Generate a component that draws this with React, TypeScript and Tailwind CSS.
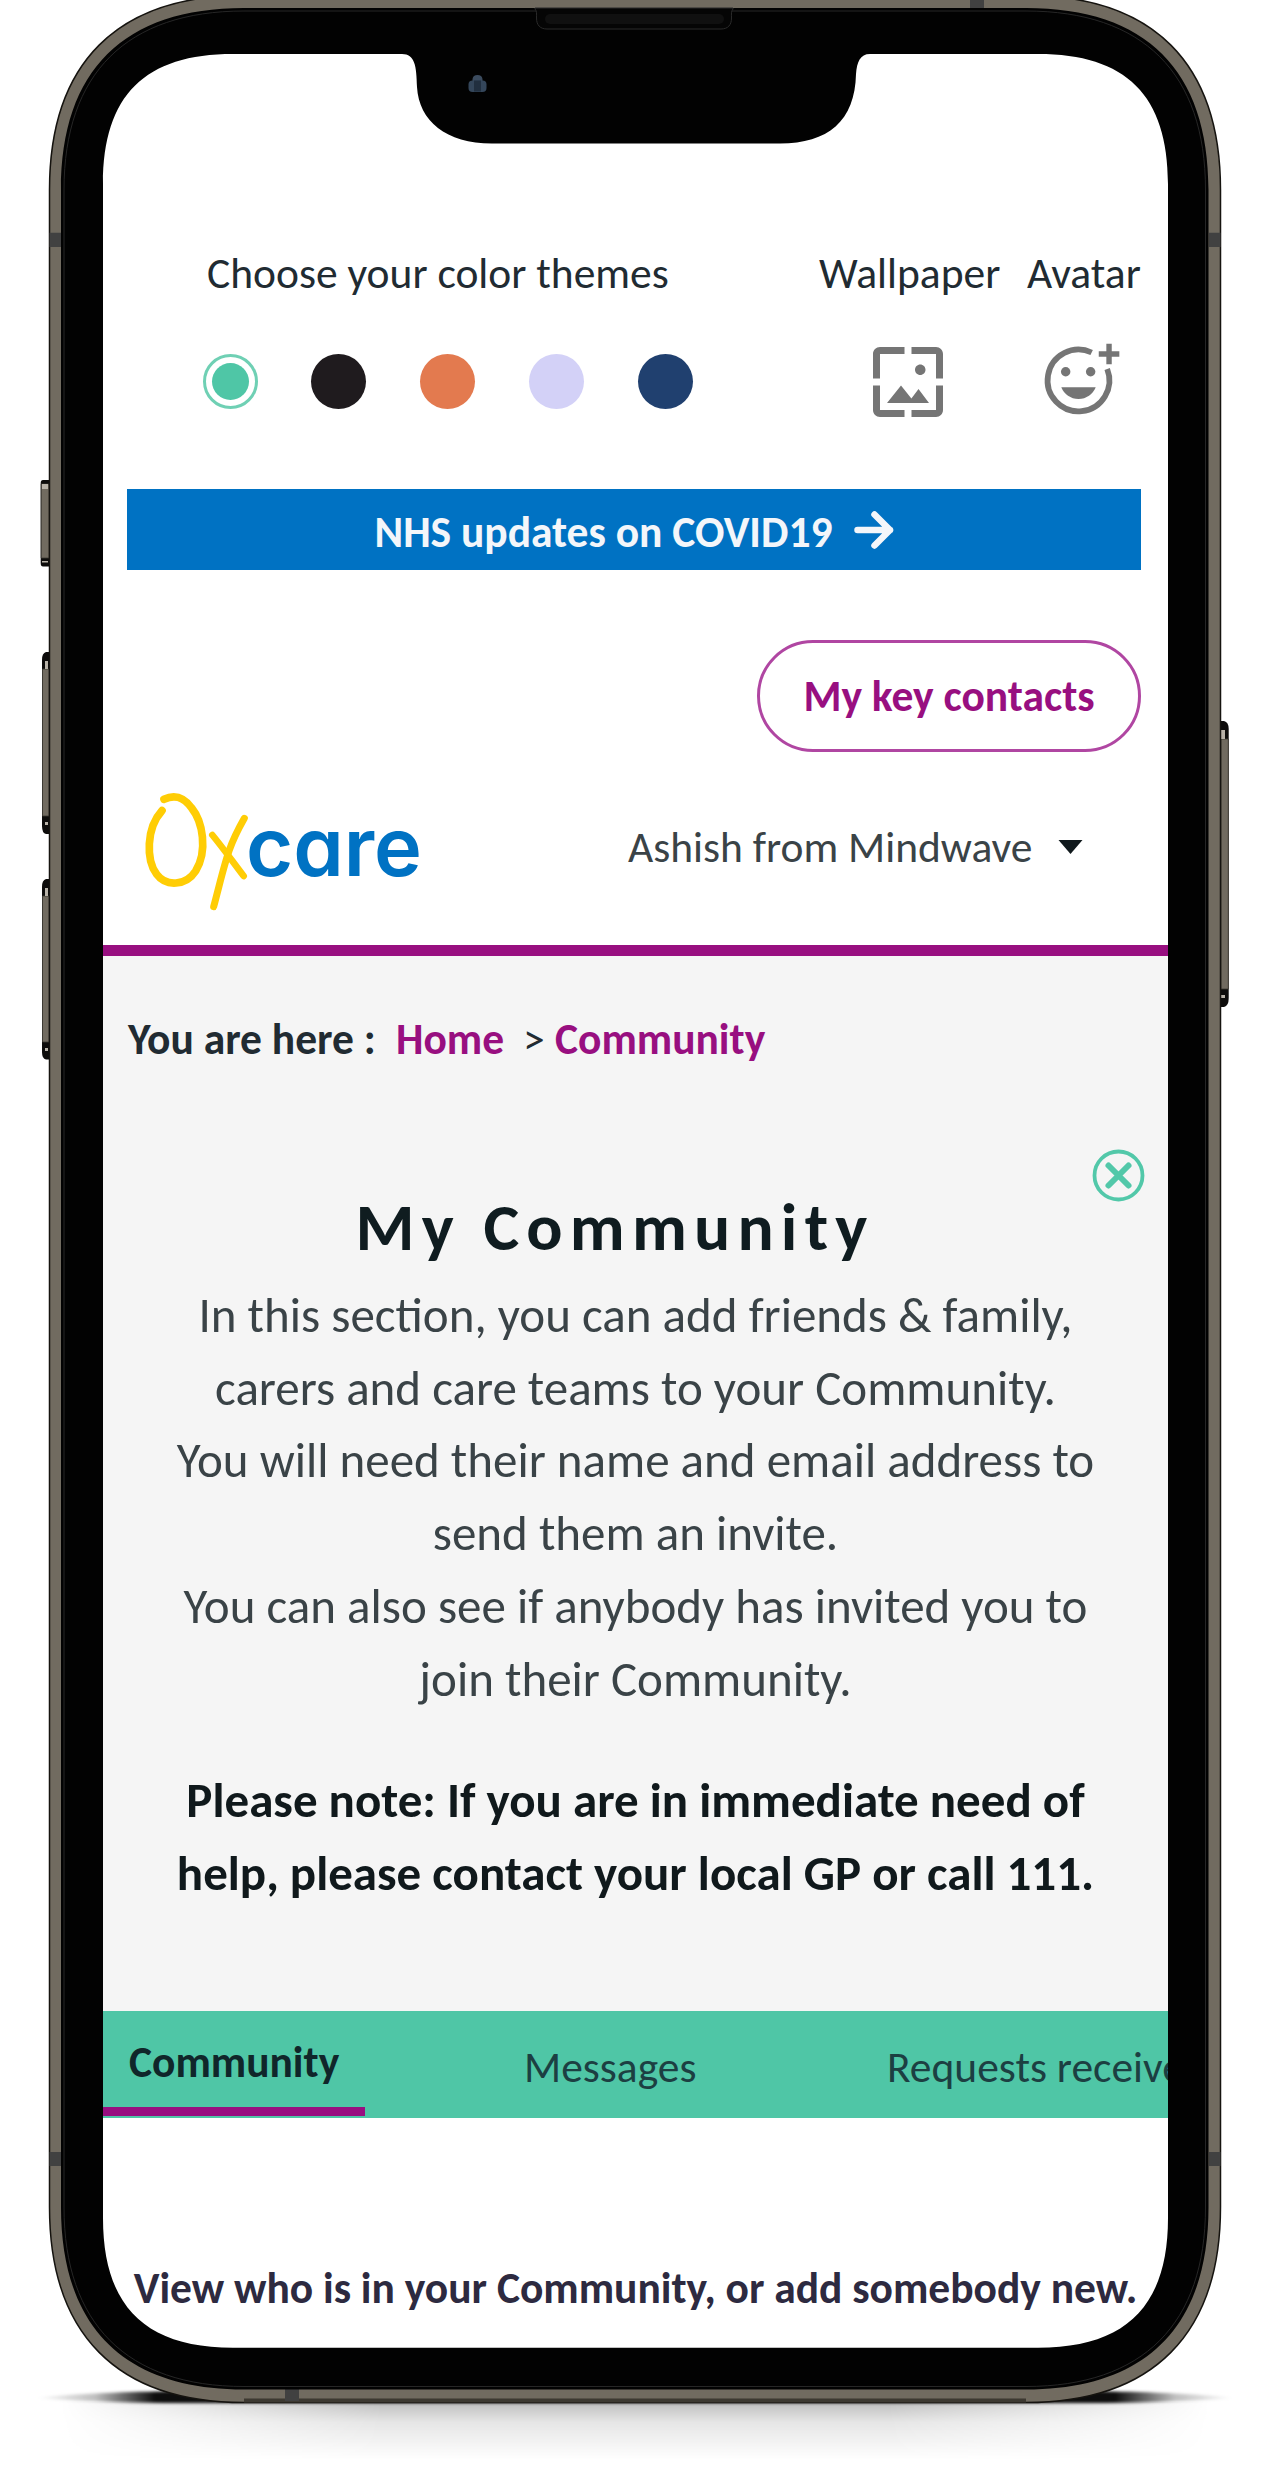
import { MdWallpaper } from "react-icons/md";

const themes = [
  { name: "Black", color: "bg-[#1f1b1e]" },
  { name: "Orange", color: "bg-[#e37a4f]" },
  { name: "Lavender", color: "bg-[#d3d1f7]" },
  { name: "Navy", color: "bg-[#20406f]" },
];

function AddReactionIcon() {
  return (
    <svg viewBox="0 0 24 24" className="h-[81px] w-[81px] overflow-visible text-[#757575]" fill="none" stroke="currentColor">
      <path d="M15.9 3.7A9.15 9.15 0 1 0 20.5 8.6" strokeWidth="1.7" />
      <path d="M21.05 1.1v6.1M18 4.15h6.1" strokeWidth="1.6" />
      <g fill="currentColor" stroke="none">
        <circle cx="8.2" cy="9.4" r="1.4" />
        <circle cx="15.6" cy="9.4" r="1.4" />
        <path d="M6.9 14h10.2c-.8 2-2.8 3.5-5.1 3.5S7.700 16 6.900 14z" />
      </g>
    </svg>
  );
}

function Logo() {
  return (
    <div className="flex h-[150px] w-[300px] shrink-0 items-start">
      <svg viewBox="0 0 312 450" className="h-[150px] w-[104px] shrink-0 overflow-visible">
        <g fill="none" stroke="#ffcd05" strokeLinecap="round">
          <path d="M66 92C18 145 18 240 50 283C78 321 138 318 167 273C204 212 188 125 155 84C128 48 102 44 72 58" strokeWidth="23" />
          <path d="M313 115C262 205 258 240 221 380" strokeWidth="21" />
          <path d="M217 165C250 205 278 245 311 288" strokeWidth="20" />
        </g>
      </svg>
      <p className="ml-0.5 mt-[17px] text-[81px] font-semibold leading-[100px] text-[#0072c3] font-[Inter] [font-feature-settings:'ss01','cv11']">care</p>
    </div>
  );
}

function PhoneFrame() {
  return (
    <svg viewBox="0 0 1266 2479" className="pointer-events-none absolute left-0 top-0 h-[2479px] w-[1266px]">
      <defs>
        <linearGradient id="contact" x1="0" x2="1" y1="0" y2="0">
          <stop offset="0" stopColor="#000" stopOpacity="0" />
          <stop offset="0.05" stopColor="#000" stopOpacity="0.25" />
          <stop offset="0.1" stopColor="#000" stopOpacity="0.95" />
          <stop offset="0.9" stopColor="#000" stopOpacity="0.95" />
          <stop offset="0.95" stopColor="#000" stopOpacity="0.25" />
          <stop offset="1" stopColor="#000" stopOpacity="0" />
        </linearGradient>
        <linearGradient id="ground" x1="0" x2="0" y1="0" y2="1">
          <stop offset="0" stopColor="#000" stopOpacity="0.26" />
          <stop offset="0.35" stopColor="#000" stopOpacity="0.1" />
          <stop offset="1" stopColor="#000" stopOpacity="0" />
        </linearGradient>
        <linearGradient id="fade" x1="0" x2="1" y1="0" y2="0">
          <stop offset="0" stopColor="#fff" stopOpacity="0" />
          <stop offset="0.28" stopColor="#fff" />
          <stop offset="0.72" stopColor="#fff" />
          <stop offset="1" stopColor="#fff" stopOpacity="0" />
        </linearGradient>
        <mask id="groundMask">
          <rect x="60" y="2390" width="1150" height="80" fill="url(#fade)" />
        </mask>
        <filter id="soft" x="-5%" y="-50%" width="110%" height="200%">
          <feGaussianBlur stdDeviation="1.5" />
        </filter>
      </defs>

      <rect x="60" y="2402" width="1150" height="58" fill="url(#ground)" mask="url(#groundMask)" />
      <path d="M35 2398C90 2392 140 2392 180 2391H1090C1130 2392 1180 2392 1235 2398C1180 2402 1130 2403 1090 2403H180C140 2403 90 2402 35 2398Z" fill="url(#contact)" filter="url(#soft)" />

      {/* side keys */}
      <g fill="#0d0c0b">
        <path d="M49 480H43Q40.700 480 40.700 483V563Q40.700 566.5 43 566.5H49Z" />
        <path d="M49 652H46Q42 653 42 660V826Q42 833 46 834H49Z" />
        <path d="M49 879H46Q42 880 42 887V1052Q42 1059 46 1059.500H49Z" />
        <path d="M1220 721H1224Q1228.700 722 1228.700 729V998Q1228.700 1006 1224 1007H1220Z" />
      </g>
      <g fill="#716b60" stroke="#3d3a34" strokeWidth="0.8">
        <path d="M41.200 484H49V558H41.200Z" />
        <path d="M42.500 669H49V816H42.500Z" />
        <path d="M42.500 896H49V1042H42.500Z" />
        <path d="M1221 739H1228.300V989H1221Z" />
      </g>
      <g fill="#b8b2a8">
        <path d="M42 484H48V489H42ZM42 561H48V562.500H42ZM45 661H48V669H45ZM45 822H48V825H45ZM45 888H48V896H45ZM45 1048H48V1051H45ZM1221 730H1225V739H1221ZM1221 995H1225V998H1221Z" />
      </g>

      {/* body, metal rim and glass; the screen area is cut out of every layer */}
      <path
        fillRule="evenodd"
        fill="#716b60"
        stroke="#15130f"
        strokeWidth="1.5"
        d="M49.500 190C49.500 63 117 -4.500 244 -4.500H1026C1153 -4.500 1220.500 63 1220.500 190V2207C1220.500 2334 1153 2402.500 1026 2402.500H244C117 2402.500 49.500 2334 49.500 2207ZM80 190V2207C80 2320 130 2372 244 2372H1026C1140 2372 1190 2320 1190 2207V190C1190 80 1140 30 1026 30H244C130 30 80 80 80 190Z"
      />
      <path d="M244 2400.500H1026" stroke="#3d3931" strokeWidth="4" />
      <g fill="#414141">
        <path d="M49.500 232.700H61V247H49.500ZM49.500 2152H61V2166H49.500ZM1209 232.700H1220.500V247H1209ZM1209 2152H1220.500V2166H1209ZM970 0H984V9H970ZM285 2389H299V2401H285Z" />
      </g>
      <path
        fillRule="evenodd"
        fill="#020202"
        d="M61 190C61 70 124 8 244 8H1026C1146 8 1208.500 70 1208.500 190V2207C1208.500 2327 1146 2389.500 1026 2389.500H244C124 2389.500 61 2327 61 2207ZM103 184V2218C103 2306 145 2347.700 233 2347.700H1038C1126 2347.700 1168 2306 1168 2218V184C1168 95 1126 54 1038 54H870C860 54 857 62 856 74C855 121 828 143.500 780 143.500H492C446 143.500 419 121 417 87C416.500 66 415 54 402 54H233C145 54 103 95 103 184Z"
      />
      <path d="M64 190C64 73 127 11 244 11H1026C1143 11 1205.500 73 1205.500 190V2207C1205.500 2324 1143 2386.500 1026 2386.500H244C127 2386.500 64 2324 64 2207Z" fill="none" stroke="#262626" strokeWidth="1" />

      <path d="M535 8V9C537 11 536.500 14 536.500 18C536.500 25 540 29 547 29H721C728 29 731.500 25 731.500 18C731.500 14 731 11 733 9V8Z" fill="#050505" stroke="#2a2a2a" strokeWidth="1" />
      <rect x="545" y="14" width="179" height="10" rx="5" fill="#101010" />
      <path d="M472.500 79Q473 75 477.500 75Q482 75 482.500 79V82H472.500Z" fill="#3b4b5e" />
      <rect x="468.500" y="80.500" width="18" height="11.500" rx="4" fill="#34465a" />
      <rect x="474" y="80.500" width="7" height="11" fill="#212f3f" />
    </svg>
  );
}

export default function App() {
  return (
    <div className="relative h-[2479px] w-[1266px] overflow-hidden bg-white font-[Carlito,Calibri,Lato,sans-serif] text-[43.5px] leading-[52px] text-[#212b32]">
      <main className="ml-[103px] flex h-[2347px] w-[1065px] flex-col overflow-hidden whitespace-nowrap">
        <header className="flex h-[945px] shrink-0 flex-col pl-6 pr-[27px] pt-[248px]">
          <div className="flex h-[52px] pl-20">
            <span className="w-[612px]">Choose your color themes</span>
            <span className="w-[208px]">Wallpaper</span>
            <span>Avatar</span>
          </div>
          <div className="mt-10 flex h-[84px] items-start">
            <div className="mr-[173px] flex h-[82px] items-center gap-[53.800px] pl-[75.500px]">
              <button aria-label="Green" className="flex size-[55px] items-center justify-center rounded-full border-[3.500px] border-[#6fd0b4]">
                <span className="size-[37px] rounded-full bg-[#4fc6a6]" />
              </button>
              {themes.map((t) => (
                <button key={t.name} aria-label={t.name} className={`size-[55px] rounded-full ${t.color}`} />
              ))}
            </div>
            <MdWallpaper className="mr-[88px] size-[84px] shrink-0 text-[#757575]" />
            <AddReactionIcon />
          </div>
          <a className="mt-[65px] flex h-[81px] shrink-0 items-center justify-center bg-[#0072c3] pt-1.5 font-bold text-[#f3f6fa]">
            NHS updates on COVID19
            <svg viewBox="0 0 40 38" className="-mt-1.5 ml-[21px] h-[38px] w-10" fill="none" stroke="currentColor" strokeWidth="6.500" strokeLinecap="round" strokeLinejoin="round">
              <path d="M3.500 19H36M20.500 3.500L36 19L20.500 34.500" />
            </svg>
          </a>
          <button className="mt-[70px] flex h-28 w-96 shrink-0 items-center justify-center self-end rounded-full border-[3px] border-[#b046a2] pt-0.5 font-bold text-[#980f80]">
            My key contacts
          </button>
          <div className="mt-7 flex h-[150px] shrink-0 items-start pl-[13px]">
            <Logo />
            <div className="ml-[188px] mt-[42px] flex h-[52px] items-center text-[#3a4347]">
              Ashish from Mindwave
              <svg viewBox="0 0 25 14" className="-mt-0.5 ml-[26px] h-3.5 w-[25px]">
                <path d="M0.500 0H24.500L12.500 14Z" fill="#10191c" />
              </svg>
            </div>
          </div>
        </header>

        <section className="h-[1066px] shrink-0 border-t-[11px] border-[#980f80] bg-[#f5f5f5] pt-[58px]">
          <nav className="flex h-[52px] pl-[25px] font-bold">
            <span className="w-[268px]">You are here :</span>
            <a className="w-[127px] text-[#980f80]">Home</a>
            <span className="w-[32px] font-normal">&gt;</span>
            <a className="text-[#980f80]">Community</a>
          </nav>
          <div className="mt-[83px] flex h-[53px] justify-end pr-[23px]">
            <svg viewBox="0 0 53 53" className="size-[53px]" fill="none" stroke="#52c8a9">
              <circle cx="26.500" cy="26.500" r="24" strokeWidth="3.800" />
              <path d="M16.500 16.500L36.500 36.500M36.500 16.500L16.500 36.500" strokeWidth="6" strokeLinecap="round" />
            </svg>
          </div>
          <h1 className="-mt-[15px] pr-[41px] text-center text-[67.500px] font-bold leading-[80px] tracking-[7.200px] text-[#0f1c20]">My Community</h1>
          <p className="mt-3 text-center text-[49px] leading-[72.700px] text-[#3a4347]">
            In this section, you can add friends &amp; family,
            <br />
            carers and care teams to your Community.
            <br />
            You will need their name and email address to
            <br />
            send them an invite.
            <br />
            You can also see if anybody has invited you to
            <br />
            join their Community.
          </p>
          <p className="mt-[49px] text-center text-[49px] font-bold leading-[72.700px] text-[#10191c]">
            Please note: If you are in immediate need of
            <br />
            help, please contact your local GP or call 111.
          </p>
        </section>

        <nav className="flex h-[107px] shrink-0 bg-[#4fc6a6]">
          <a className="h-[105px] w-[262px] shrink-0 border-b-[9px] border-[#980f80] pl-[26px] pt-[26px] font-bold text-[#10262a]">Community</a>
          <a className="w-[363px] shrink-0 pl-[159px] pt-[31px] text-[#1c3f42]">Messages</a>
          <a className="shrink-0 pl-[159px] pt-[31px] text-[#1c3f42]">Requests received</a>
        </nav>
        <p className="mt-[145px] shrink-0 text-center font-bold text-[#2d2a40]">View who is in your Community, or add somebody new.</p>
      </main>
      <PhoneFrame />
    </div>
  );
}
